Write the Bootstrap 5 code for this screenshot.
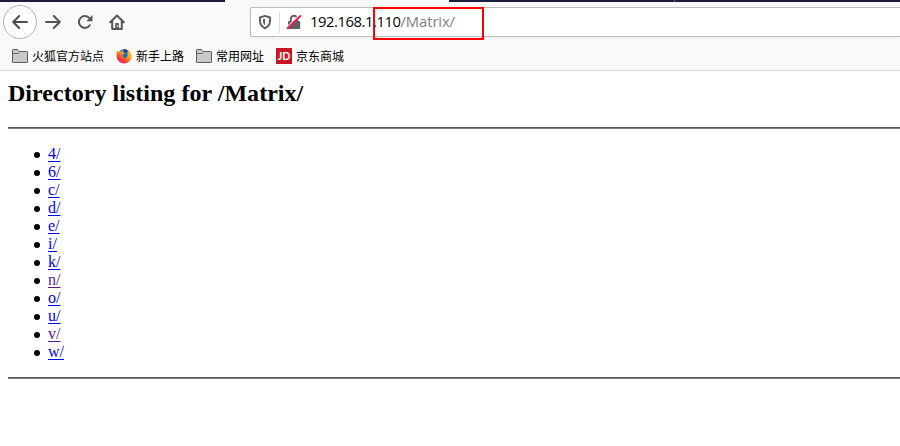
<!DOCTYPE html>
<html lang="zh-CN">
<head>
<meta charset="utf-8">
<meta name="viewport" content="width=device-width, initial-scale=1">
<title>Directory listing for /Matrix/</title>
<link href="https://cdn.jsdelivr.net/npm/bootstrap@5.3.0/dist/css/bootstrap.min.css" rel="stylesheet">
<style>
body{background:#fff;color:#000;font-family:"Liberation Sans","Noto Sans CJK SC",sans-serif}
.chrome{background:#f9f9fa;border-bottom:1px solid #dedede;height:71px}
.tabstrip{height:2px}
.tab-dark{background:#1d1b3e;width:225px}
.tab-live{background:#f9f9fa;width:224px}
.tab-line{width:226px;border-right:1px solid #65647e}
.toolbar-row{height:40px;padding-left:3px}
.back{width:34px;height:34px;border:1px solid #b5b5b5;background:#fff}
.tool{width:32px;height:32px}
.urlbar{height:30px;margin-left:117px;margin-bottom:1px;border:1px solid #bdbdbd;border-right:0;border-radius:2px 0 0 2px;background:#fff;box-shadow:0 1px 4px rgba(0,0,0,.06)}
.shield{margin-left:6px}
.divide{width:1px;height:22px;background:#dedede;margin-left:6px}
.lock{margin-left:6px}
.address{font:14.8px/26px "Open Sans",sans-serif;letter-spacing:-.44px;margin:0 0 2px 8px;white-space:nowrap}
.address span{color:#808084;letter-spacing:-.1px}
.marked{left:373px;top:7px;width:111px;height:33px;border:2px solid #f00}
.bookmarks{height:28px;padding-left:12px;gap:12px;font:12px/16px "Noto Sans CJK SC",sans-serif}
.bookmark{gap:4px}
.listing{font-family:"Liberation Serif",serif;font-size:16px;line-height:18px;padding-left:8px}
.listing h2{font-size:24px;line-height:27px;font-weight:700;letter-spacing:.03px;margin:9px 0 20px}
.rule{height:2px;background:linear-gradient(#545454 50%,#818181 50%)}
.listing ul{margin:16px 0;padding-left:26px}
.listing li::before{content:"";width:6px;height:6px;margin:7px 8px 0 0;border-radius:50%;background:#000}
.listing a{color:#00e;text-decoration:underline;text-decoration-thickness:1px;text-underline-offset:2px;text-decoration-skip-ink:none}
.listing a.seen{color:#551a8b}
</style>
</head>
<body>
<header class="chrome position-relative overflow-hidden">
  <div class="tabstrip d-flex">
    <div class="tab-dark"></div><div class="tab-live"></div><div class="tab-dark tab-line"></div><div class="tab-dark"></div>
  </div>
  <div class="toolbar-row d-flex align-items-center">
    <div class="back rounded-circle d-flex align-items-center justify-content-center flex-shrink-0">
      <svg width="16" height="16" viewBox="0 0 16 16" fill="none" stroke="#4b4b4c" stroke-width="2" stroke-linecap="round" stroke-linejoin="round"><path d="M15 8H1.5M7.2 2 1.2 8l6 6"/></svg>
    </div>
    <div class="tool d-flex align-items-center justify-content-center flex-shrink-0">
      <svg width="16" height="16" viewBox="0 0 16 16" fill="none" stroke="#555556" stroke-width="2" stroke-linecap="round" stroke-linejoin="round"><path d="M1 8h13.5M8.8 2l6 6-6 6"/></svg>
    </div>
    <div class="tool d-flex align-items-center justify-content-center flex-shrink-0">
      <svg width="16" height="16" viewBox="0 0 16 16" fill="none" stroke="#555556" stroke-width="2" stroke-linecap="round"><path d="M12.8 11.2A5.9 5.9 0 1 1 12.4 4.2"/><path d="M15.5 1v6.2H9.3z" fill="#555556" stroke="none"/></svg>
    </div>
    <div class="tool d-flex align-items-center justify-content-center flex-shrink-0">
      <svg width="16" height="16" viewBox="0 0 16 16" fill="none" stroke="#555556" stroke-width="2" stroke-linecap="round" stroke-linejoin="round"><path d="M1.2 8.3 8 1.5l6.8 6.8M3.2 7.5V15h9.6V7.5"/><path d="M6.2 15V9.8q0-.8.8-.8h2q.8 0 .8.8V15z" fill="#555556" stroke="none"/><path d="M8.3 11.4v1" stroke="#f9f9fa" stroke-width="1"/></svg>
    </div>
    <div class="urlbar d-flex align-items-center flex-grow-1">
      <svg class="shield flex-shrink-0" width="16" height="16" viewBox="0 0 16 16"><path d="M8 1.9 13 3.5v3.6c0 3.5-1.9 5.7-5 7.2-3.1-1.5-5-3.7-5-7.2V3.5z" fill="none" stroke="#606061" stroke-width="2" stroke-linejoin="round"/><path d="M8 4.8v6.4c-1.4-1-2-2.3-2-4V5.3z" fill="#606061"/></svg>
      <div class="divide"></div>
      <svg class="lock flex-shrink-0" width="16" height="16" viewBox="0 0 16 16"><path d="M4.8 8V5a3.2 3.2 0 0 1 6.4 0v3" fill="none" stroke="#606061" stroke-width="2"/><rect x="2" y="7" width="12.2" height="8" rx="1" fill="#606061"/><path d="M.8 13.2 13.8.8" stroke="#fff" stroke-width="1.2"/><path d="M1.6 14.3 14.4 2" stroke="#f51d50" stroke-width="2" stroke-linecap="round"/></svg>
      <div class="address">192.168.1.110<span>/Matrix/</span></div>
    </div>
  </div>
  <nav class="bookmarks d-flex align-items-center">
    <div class="bookmark d-flex align-items-center">
      <svg width="16" height="16" viewBox="0 0 16 16"><path d="M.5 14V2.2q0-.7.7-.7h4.3l1.7 2h7.6q.7 0 .7.7V14q0 .5-.6.5H1.1q-.6 0-.6-.5z" fill="#c9c9ca" stroke="#5d5d5e"/><path d="M1 5.5h5.4l1.2-1.2" fill="none" stroke="#727273"/></svg>
      <span>火狐官方站点</span>
    </div>
    <div class="bookmark d-flex align-items-center">
      <svg width="16" height="16" viewBox="0 0 16 16">
        <defs><linearGradient id="flame" x1=".9" y1="0" x2=".2" y2="1"><stop offset="0" stop-color="#ffe226"/><stop offset=".45" stop-color="#ff9a16"/><stop offset=".75" stop-color="#ff3a37"/><stop offset="1" stop-color="#e0157d"/></linearGradient></defs>
        <circle cx="8" cy="7.5" r="6.2" fill="#1769d3"/><path d="M8.2 1.1q2 .1 3.6 1.3L10 5 7 4z" fill="#173f96"/>
        <path d="M1.2 2.4 2.7 4Q4 2.8 5.8 3.4L7.4 2l-.3 2.1 2 1.2-2.3 1.2q-.7 2.5 1.7 3.2 2 .2 3-1.5.7-2.5-1-4.2l2 1Q12.2 2.8 10.9 1q4.5 2.2 4.8 7A7.5 7.5 0 0 1 .6 8Q.2 5 1.2 2.4z" fill="url(#flame)"/>
      </svg>
      <span>新手上路</span>
    </div>
    <div class="bookmark d-flex align-items-center">
      <svg width="16" height="16" viewBox="0 0 16 16"><path d="M.5 14V2.2q0-.7.7-.7h4.3l1.7 2h7.6q.7 0 .7.7V14q0 .5-.6.5H1.1q-.6 0-.6-.5z" fill="#c9c9ca" stroke="#5d5d5e"/><path d="M1 5.5h5.4l1.2-1.2" fill="none" stroke="#727273"/></svg>
      <span>常用网址</span>
    </div>
    <div class="bookmark d-flex align-items-center">
      <svg width="16" height="16" viewBox="0 0 16 16"><path fill="#c91623" d="M0 0h16v16H0z"/><text x="1.8" y="12.3" font-family="Lato, sans-serif" font-weight="700" font-size="12" fill="#fff" textLength="12.6" lengthAdjust="spacingAndGlyphs">JD</text></svg>
      <span>京东商城</span>
    </div>
  </nav>
</header>
<div class="marked position-absolute"></div>
<main class="listing overflow-hidden">
  <h2>Directory listing for /Matrix/</h2>
  <div class="rule"></div>
  <ul class="list-unstyled">
    <li class="d-flex"><a href="#">4/</a></li>
    <li class="d-flex"><a href="#">6/</a></li>
    <li class="d-flex"><a href="#">c/</a></li>
    <li class="d-flex"><a href="#">d/</a></li>
    <li class="d-flex"><a href="#">e/</a></li>
    <li class="d-flex"><a href="#">i/</a></li>
    <li class="d-flex"><a href="#">k/</a></li>
    <li class="d-flex"><a href="#" class="seen">n/</a></li>
    <li class="d-flex"><a href="#">o/</a></li>
    <li class="d-flex"><a href="#">u/</a></li>
    <li class="d-flex"><a href="#" class="seen">v/</a></li>
    <li class="d-flex"><a href="#">w/</a></li>
  </ul>
  <div class="rule"></div>
</main>
<script src="https://cdn.jsdelivr.net/npm/bootstrap@5.3.0/dist/js/bootstrap.bundle.min.js"></script>
</body>
</html>
